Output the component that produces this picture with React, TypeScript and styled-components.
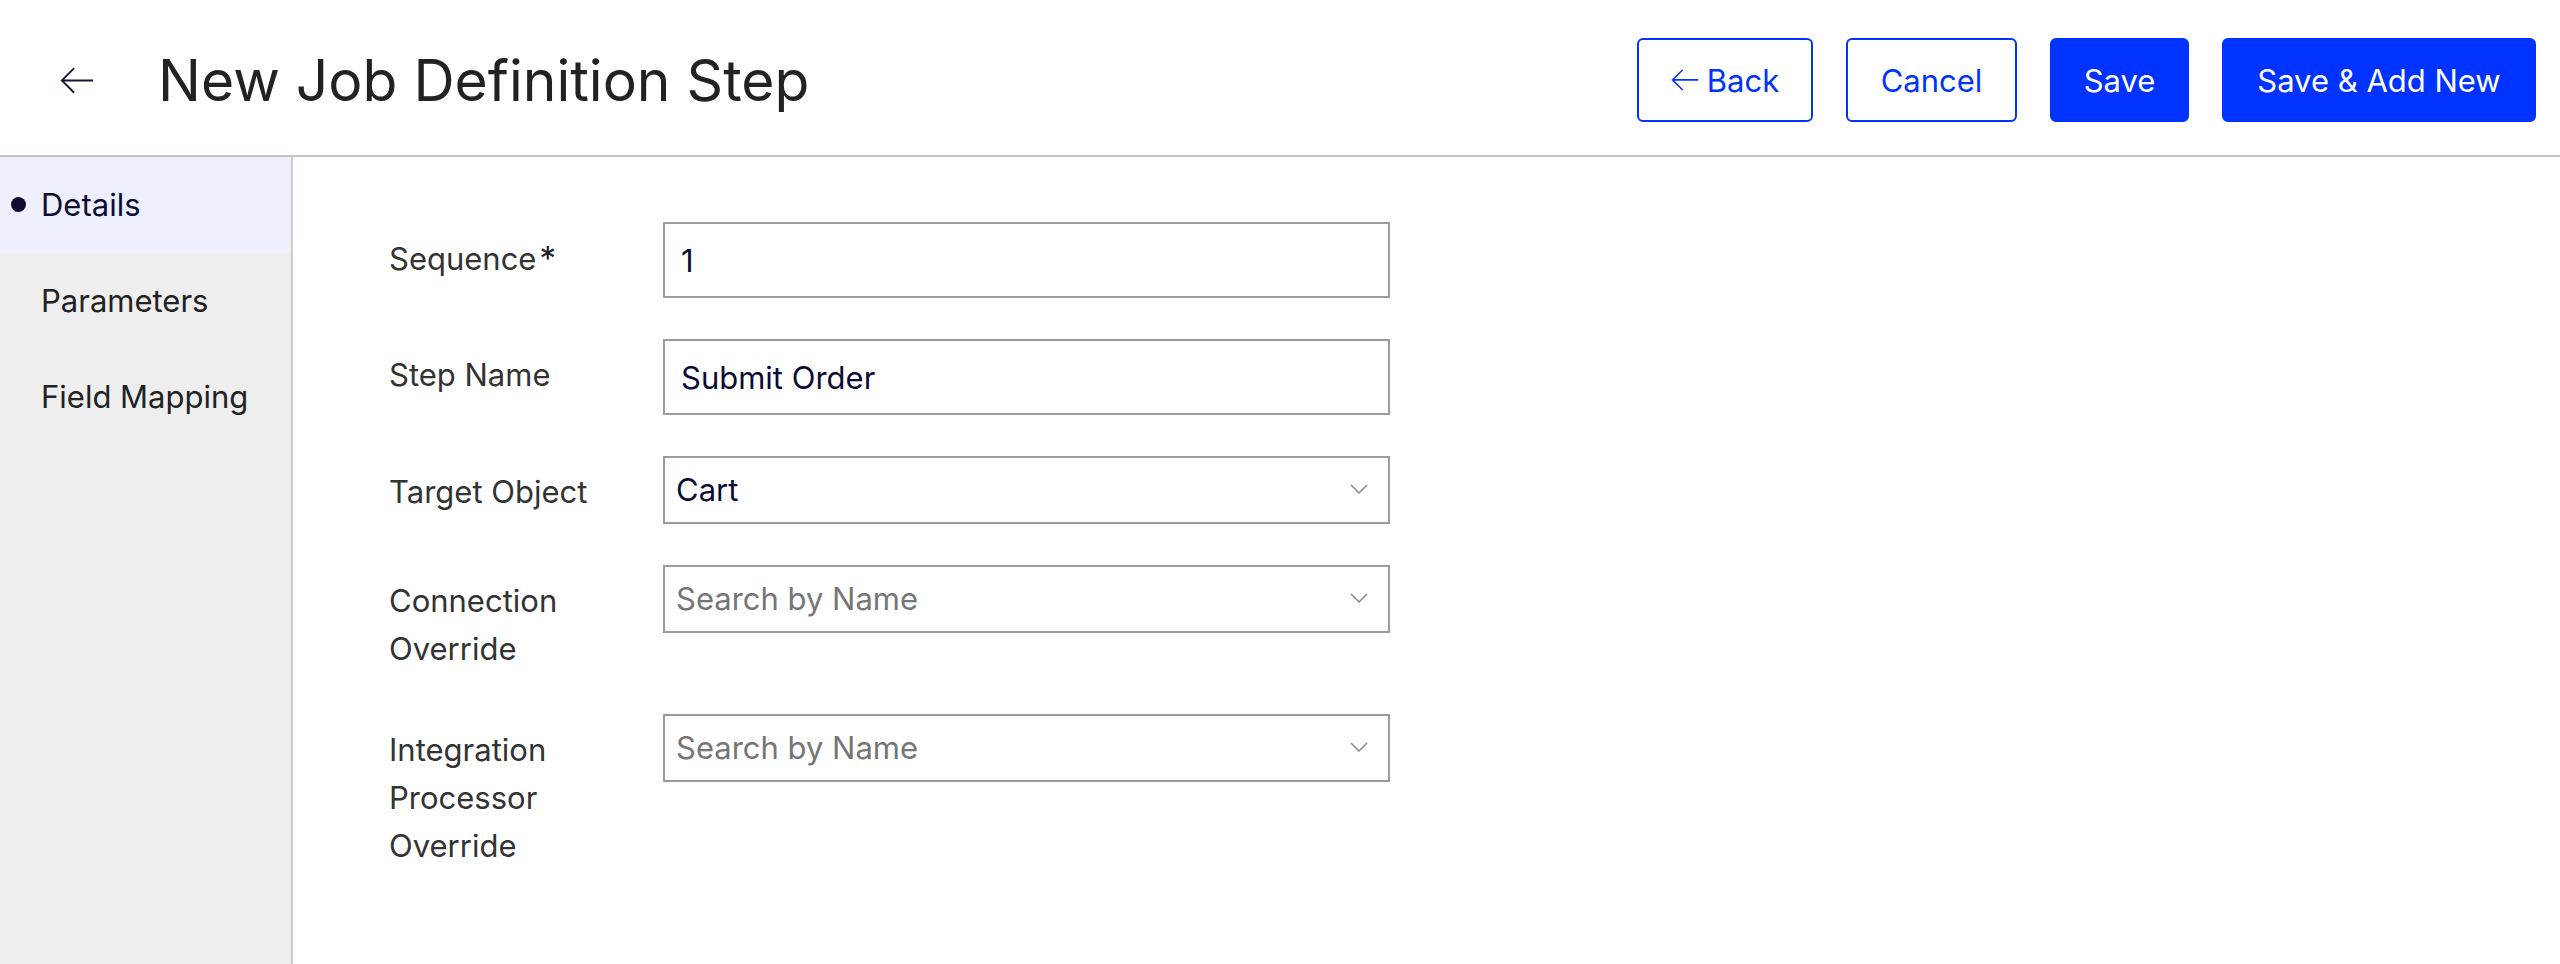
import React from "react";
import styled, { createGlobalStyle } from "styled-components";

const GlobalStyle = createGlobalStyle`
  html, body { margin: 0; padding: 0; background: #ffffff; }
  body { font-family: Inter, "Noto Sans", "Liberation Sans", sans-serif; }
  #root { min-height: 100vh; }
  * { box-sizing: border-box; }
`;

const Page = styled.div`
  display: flex;
  flex-direction: column;
  height: 100vh;
  overflow: hidden;
`;

const Header = styled.header`
  display: flex;
  align-items: center;
  height: 157px;
  padding: 5px 24px 0 58px;
  border-bottom: 2px solid #c4c4c4;
  flex-shrink: 0;
`;

const BackIconButton = styled.button`
  display: flex;
  align-items: center;
  justify-content: center;
  width: 38px;
  height: 38px;
  padding: 0;
  border: none;
  background: transparent;
  color: #15153a;
  cursor: pointer;
`;

const Title = styled.h1`
  margin: 0 0 0 62px;
  font-size: 57px;
  font-weight: 400;
  color: #222222;
  letter-spacing: 0;
  flex: 1;
`;

const Actions = styled.div`
  display: flex;
  align-items: center;
  gap: 33px;
`;

const Button = styled.button<{ $primary?: boolean; $w: number }>`
  display: flex;
  align-items: center;
  justify-content: center;
  gap: 8px;
  height: 84px;
  width: ${(p) => p.$w}px;
  border-radius: 6px;
  border: 2px solid #0033ff;
  background: ${(p) => (p.$primary ? "#0033ff" : "#ffffff")};
  color: ${(p) => (p.$primary ? "#ffffff" : "#0033ff")};
  font-family: Inter, "Noto Sans", sans-serif;
  font-size: 31px;
  font-weight: 400;
  cursor: pointer;
  padding: 0;
`;

const Body = styled.div`
  display: flex;
  flex: 1;
  min-height: 0;
`;

const Sidebar = styled.nav`
  width: 293px;
  flex-shrink: 0;
  background: #eeeeee;
  border-right: 2px solid #cccccc;
  display: flex;
  flex-direction: column;
`;

const NavItem = styled.div<{ $active?: boolean }>`
  position: relative;
  display: flex;
  align-items: center;
  height: 96px;
  padding-left: 41px;
  padding-bottom: 2px;
  font-size: 31px;
  color: ${(p) => (p.$active ? "#0d0d33" : "#222222")};
  background: ${(p) => (p.$active ? "#eef0fd" : "transparent")};

  &::before {
    content: "";
    display: ${(p) => (p.$active ? "block" : "none")};
    position: absolute;
    left: 11px;
    top: 50%;
    width: 15px;
    height: 15px;
    margin-top: -8px;
    border-radius: 50%;
    background: #0d0d33;
  }
`;

const Content = styled.main`
  flex: 1;
  padding: 65px 0 0 96px;
`;

const Form = styled.div`
  display: grid;
  grid-template-columns: 274px 727px;
  row-gap: 41px;
  align-items: start;
`;

const Label = styled.label`
  padding-top: 12px;
  font-size: 31px;
  line-height: 48px;
  color: #333333;
  width: 200px;
`;

const Required = styled.span`
  margin-left: 3px;
  font-size: 33px;
  color: #222222;
`;

const TextInput = styled.input`
  width: 100%;
  height: 76px;
  border: 2px solid #9b9b9b;
  border-radius: 0;
  padding: 0 16px;
  font-family: Inter, "Noto Sans", sans-serif;
  font-size: 31px;
  color: #0b0b35;
  background: #ffffff;
  outline: none;
`;

const SelectBox = styled.div`
  display: flex;
  align-items: center;
  justify-content: space-between;
  width: 100%;
  height: 68px;
  border: 2px solid #9b9b9b;
  padding: 0 20px 2px 11px;
  background: #ffffff;
`;

const SelectValue = styled.span<{ $placeholder?: boolean }>`
  font-size: 31px;
  color: ${(p) => (p.$placeholder ? "#767676" : "#0b0b35")};
`;

const ArrowLeft = ({ size = 36, stroke = 2 }: { size?: number; stroke?: number }) => (
  <svg width={size} height={size * 0.85} viewBox="0 0 36 30" fill="none">
    <path d="M35 15H2M15 2L2 15L15 28" stroke="currentColor" strokeWidth={stroke} />
  </svg>
);

const Chevron = () => (
  <svg width="18" height="10" viewBox="0 0 18 10" fill="none">
    <path d="M1 1L9 9L17 1" stroke="#888888" strokeWidth="1.5" />
  </svg>
);

const Select = ({ value, placeholder }: { value?: string; placeholder?: string }) => (
  <SelectBox>
    <SelectValue $placeholder={!value}>{value || placeholder}</SelectValue>
    <Chevron />
  </SelectBox>
);

export default function App() {
  return (
    <>
      <GlobalStyle />
      <Page>
        <Header>
          <BackIconButton aria-label="Back">
            <ArrowLeft size={34} stroke={2} />
          </BackIconButton>
          <Title>New Job Definition Step</Title>
          <Actions>
            <Button $w={176}>
              <ArrowLeft size={28} stroke={2} />
              Back
            </Button>
            <Button $w={171}>Cancel</Button>
            <Button $primary $w={139}>Save</Button>
            <Button $primary $w={314}>Save &amp; Add New</Button>
          </Actions>
        </Header>
        <Body>
          <Sidebar>
            <NavItem $active>Details</NavItem>
            <NavItem>Parameters</NavItem>
            <NavItem>Field Mapping</NavItem>
          </Sidebar>
          <Content>
            <Form>
              <Label>
                Sequence<Required>*</Required>
              </Label>
              <TextInput defaultValue="1" />
              <Label>Step Name</Label>
              <TextInput defaultValue="Submit Order" />
              <Label>Target Object</Label>
              <Select value="Cart" />
              <Label>Connection Override</Label>
              <Select placeholder="Search by Name" />
              <Label>Integration Processor Override</Label>
              <Select placeholder="Search by Name" />
            </Form>
          </Content>
        </Body>
      </Page>
    </>
  );
}
